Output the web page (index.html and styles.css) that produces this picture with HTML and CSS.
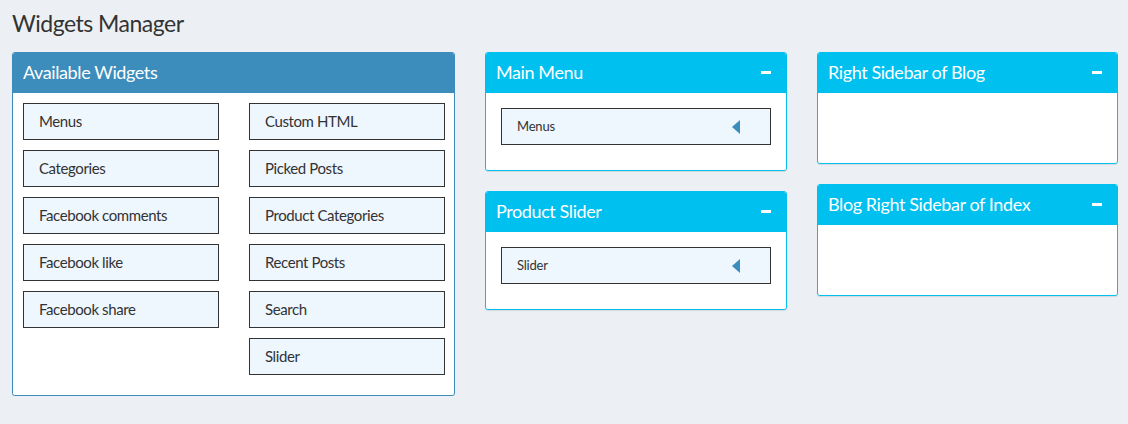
FILE: index.html
```html
<!DOCTYPE html>
<html>
<head>
<meta charset="utf-8">
<link rel="stylesheet" href="styles.css">
</head>
<body>
<h1 class="page-title">Widgets Manager</h1>
<div class="layout">
  <div class="box box-primary">
    <div class="box-header"><span class="box-title">Available Widgets</span></div>
    <div class="box-body avail-grid">
      <div class="col">
        <div class="widget">Menus</div>
        <div class="widget">Categories</div>
        <div class="widget">Facebook comments</div>
        <div class="widget">Facebook like</div>
        <div class="widget">Facebook share</div>
      </div>
      <div class="col">
        <div class="widget">Custom HTML</div>
        <div class="widget">Picked Posts</div>
        <div class="widget">Product Categories</div>
        <div class="widget">Recent Posts</div>
        <div class="widget">Search</div>
        <div class="widget">Slider</div>
      </div>
    </div>
  </div>
  <div class="stack">
    <div class="box box-info">
      <div class="box-header"><span class="box-title">Main Menu</span><span class="minus"></span></div>
      <div class="box-body sidebar-body">
        <div class="widget small">Menus<svg class="caret" width="8" height="14" viewBox="0 0 8 14"><path d="M8 0 L0 7 L8 14 Z" fill="#3c8dbc"/></svg></div>
      </div>
    </div>
    <div class="box box-info">
      <div class="box-header"><span class="box-title">Product Slider</span><span class="minus"></span></div>
      <div class="box-body sidebar-body">
        <div class="widget small">Slider<svg class="caret" width="8" height="14" viewBox="0 0 8 14"><path d="M8 0 L0 7 L8 14 Z" fill="#3c8dbc"/></svg></div>
      </div>
    </div>
  </div>
  <div class="stack">
    <div class="box box-info">
      <div class="box-header"><span class="box-title">Right Sidebar of Blog</span><span class="minus"></span></div>
      <div class="box-body empty-body"></div>
    </div>
    <div class="box box-info">
      <div class="box-header"><span class="box-title">Blog Right Sidebar of Index</span><span class="minus"></span></div>
      <div class="box-body empty-body"></div>
    </div>
  </div>
</div>
</body>
</html>
```
FILE: styles.css
```css
* { box-sizing: border-box; }
html, body { margin: 0; padding: 0; }
body {
  background: #ecf0f5;
  font-family: "Source Sans Pro", Lato, "Noto Sans", sans-serif;
  color: #333;
}
.page-title {
  margin: 0;
  padding: 9px 12px 0 12px;
  height: 52px;
  font-size: 23px;
  letter-spacing: -0.5px;
  font-weight: 400;
  line-height: 28px;
  color: #333;
}
.layout {
  display: grid;
  grid-template-columns: 443px 302px 301px;
  column-gap: 30px;
  padding-left: 12px;
  align-items: start;
}
.stack {
  display: flex;
  flex-direction: column;
  gap: 20px;
}
.box {
  background: #fff;
  border-radius: 3px;
  border: 1px solid #3c8dbc;
  box-shadow: 0 1px 1px rgba(0,0,0,0.1);
}
.box-primary { border-color: #3c8dbc; }
.box-primary .box-header { background: #3c8dbc; }
.box-info { border-color: #00c0ef; }
.box-info .box-header { background: #00c0ef; }
.box-header {
  height: 40px;
  display: flex;
  align-items: center;
  justify-content: space-between;
  padding: 0 15px 2px 10px;
  color: #fff;
  border-radius: 2px 2px 0 0;
}
.box-title {
  font-size: 18px;
  letter-spacing: -0.4px;
  line-height: 1;
}
.minus {
  width: 10px;
  height: 3px;
  background: #fff;
  margin-top: 0;
}
.box-body { background: #fff; border-radius: 0 0 3px 3px; }
.avail-grid {
  display: grid;
  grid-template-columns: 196px 196px;
  column-gap: 30px;
  padding: 10px 10px 20px 10px;
}
.col {
  display: flex;
  flex-direction: column;
  gap: 10px;
}
.widget {
  height: 37px;
  border: 1px solid #333;
  background: #eef6fe;
  display: flex;
  align-items: center;
  justify-content: space-between;
  padding: 0 0 2px 15px;
  font-size: 15px;
  letter-spacing: -0.4px;
  color: #333;
}
.widget.small {
  font-size: 13px;
  letter-spacing: -0.2px;
  padding: 0 30px 2px 15px;
}
.caret { margin-top: 2px; }
.sidebar-body {
  padding: 15px 15px 25px 15px;
}
.empty-body {
  height: 70px;
}
```
